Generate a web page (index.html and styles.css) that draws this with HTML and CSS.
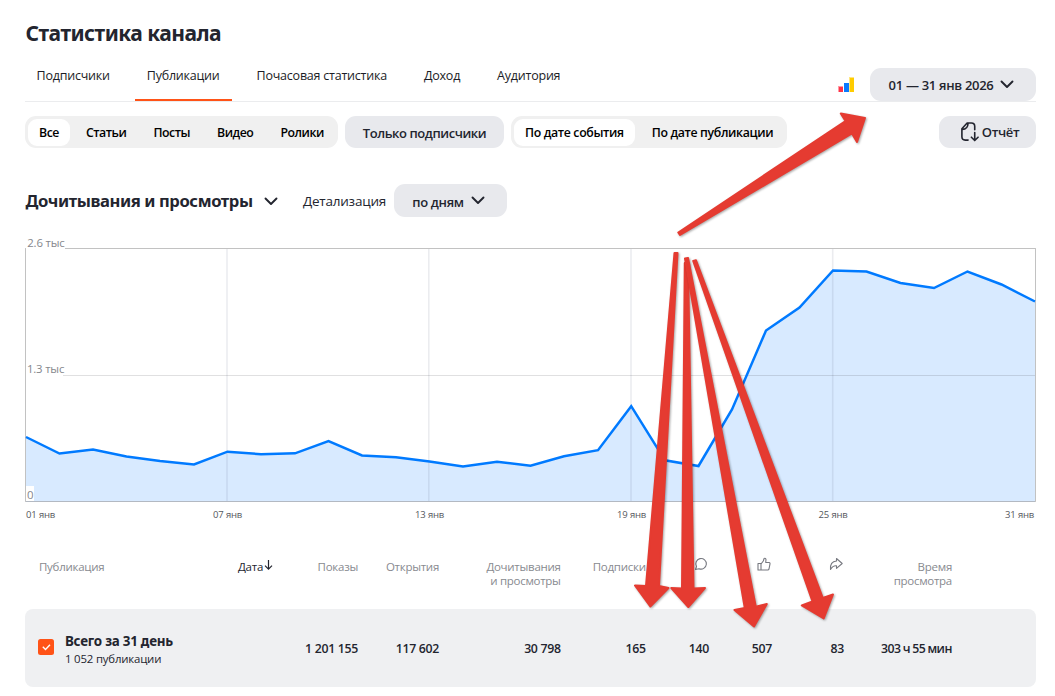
FILE: index.html
```
<!DOCTYPE html>
<html lang="ru">
<head>
<meta charset="utf-8">
<title>Статистика канала</title>
<link rel="stylesheet" href="styles.css">
</head>
<body>
<main class="page">
  <h1 class="title">Статистика канала</h1>
  <header class="header">
    <nav class="tabs">
      <a class="tab">Подписчики</a>
      <a class="tab tab-active">Публикации</a>
      <a class="tab">Почасовая статистика</a>
      <a class="tab">Доход</a>
      <a class="tab">Аудитория</a>
    </nav>
    <svg class="metrica" viewBox="0 0 16 16"><path fill="#ff9aa5" d="M0 9h5v6H0z"/><path fill="#ff3347" d="M1 10h4v5H1z"/><path fill="#0a7aff" d="M6 6h5v9H6z"/><path fill="#ffe680" d="M11 0h5v15h-5z"/><path fill="#fc0" d="M12 1h4v14h-4z"/></svg>
    <button class="button period">01 — 31 янв 2026<svg class="chevron" viewBox="0 0 14 9"><path d="M1.5 1.5 7 7l5.500-5.500"/></svg></button>
  </header>

  <section class="filters">
    <div class="group types">
      <span class="segment selected">Все</span><span class="segment">Статьи</span><span class="segment">Посты</span><span class="segment">Видео</span><span class="segment">Ролики</span>
    </div>
    <button class="button subscribers">Только подписчики</button>
    <div class="group dates">
      <span class="segment selected">По дате события</span><span class="segment">По дате публикации</span>
    </div>
    <button class="button report"><svg class="report-icon" viewBox="0 0 20 22"><path d="M8.500 19.500H5.500Q2 19.500 2 16V7.500L7.500 1.500H12Q15.500 1.500 15.500 5V8.500M2.500 8.200Q8.200 8.200 8.500 1.800M15.500 11.500V19.500M12 16.500l3.500 3.500 3.500-3.500"/></svg>Отчёт</button>
  </section>

  <section class="chart-head">
    <h2 class="metric">Дочитывания и просмотры</h2>
    <svg class="chevron metric-chevron" viewBox="0 0 14 9"><path d="M1.500 1.500 7 7l5.500-5.500"/></svg>
    <span class="detail">Детализация</span>
    <button class="button by-day">по дням<svg class="chevron" viewBox="0 0 14 9"><path d="M1.500 1.500 7 7l5.500-5.500"/></svg></button>
  </section>

  <svg class="chart" viewBox="25 234 1011 292">
    <path class="area" d="M26 501.500V437L59.500 453.500 93 449.500 126.500 456.500 160 461 194 464.500 227.500 451.700 261 454.200 295 453.300 328.500 441 362 455.500 396 457.300 429.500 461.500 463 466.500 497 461.700 530.500 465.700 564 456.200 598 450.200 631.200 406.200 665 460.300 698.500 466 732 409.500 766 330.500 799.500 307.500 833 270.500 866.500 271.500 900.500 283 934 288 967.500 271.500 1001.500 284.500 1035 301.500V501.500z"/>
    <path class="grid-v" d="M227 249V501M428.800 249V501M631 249V501M832.700 249V501"/>
    <path class="grid-h" d="M26 375.500H1035"/>
    <path class="frame" d="M25.500 501.500V248.500H1035.500V501.500z"/>
    <polyline class="line" points="26,437 59.500,453.500 93,449.500 126.500,456.500 160,461 194,464.500 227.500,451.700 261,454.200 295,453.300 328.500,441 362,455.500 396,457.300 429.500,461.500 463,466.500 497,461.700 530.500,465.700 564,456.200 598,450.200 631.200,406.200 665,460.300 698.500,466 732,409.500 766,330.500 799.500,307.500 833,270.500 866.500,271.500 900.500,283 934,288 967.500,271.500 1001.500,284.500 1035,301.500"/>
    <path class="label-bg" d="M26 236h39v13H26zM26 363h37v13H26zM26 486h8v15H26z"/>
    <g class="y-labels"><text x="27.300" y="247">2.6 тыс</text><text x="27" y="373">1.3 тыс</text><text x="27" y="498.500">0</text></g>
    <g class="x-labels"><text x="26" y="518">01 янв</text><text x="213" y="518">07 янв</text><text x="415" y="518">13 янв</text><text x="617" y="518">19 янв</text><text x="818.500" y="518">25 янв</text><text x="1005" y="518">31 янв</text></g>
  </svg>

  <section class="row head">
    <div class="first">Публикация</div>
    <div class="sorted">Дата<svg class="sort" viewBox="0 0 9 12"><path d="M4.500 1v9M1 6.700l3.500 3.500L8 6.700"/></svg></div>
    <div>Показы</div>
    <div>Открытия</div>
    <div>Дочитывания<br>и просмотры</div>
    <div>Подписки</div>
    <div><svg class="icon" viewBox="0 0 14 14"><path d="M2.500 9.500A5.300 5.300 0 1 1 5 11.700L1.500 12.500z"/></svg></div>
    <div><svg class="icon" viewBox="0 0 14 14"><path d="M1 6.500h3V13H1zM4 7l2.300-3 .8-2.500Q8.700.8 9 2.500L8.700 5.500h3.500q1 .2.800 1.300L12 12q-.3 1-1.300 1H4"/></svg></div>
    <div><svg class="icon share" viewBox="0 0 14 14"><path d="M7.500 4V1.500L13.200 6.500 7.500 11.300V8.800Q4 8.300 1.500 12.500 .8 4.500 7.500 4z"/></svg></div>
    <div>Время<br>просмотра</div>
  </section>
  <section class="row total">
    <div class="first summary">
      <svg class="check" viewBox="0 0 16 16"><rect width="16" height="16" rx="2.500"/><path d="m4.800 7.800 2.700 2.600 4.500-4.600"/></svg>
      <div><div class="total-title">Всего за 31 день</div><div class="total-count">1 052 публикации</div></div>
    </div>
    <div></div>
    <div>1 201 155</div>
    <div>117 602</div>
    <div>30 798</div>
    <div>165</div>
    <div>140</div>
    <div>507</div>
    <div>83</div>
    <div class="time">303 ч 55 мин</div>
  </section>
</main>

<svg class="arrows" viewBox="0 0 1055 696">
  <path d="M678.300 232.500 845.500 121 840.800 113.500 865 118 857 142 852 133.500 680 235Z"/>
  <path d="M674.500 253 677.500 253 659 586 668.500 588 650.300 606.500 635 585.500 646 586Z"/>
  <path d="M684.800 263 688 263 693.500 588.500 705 588 688.300 607 671.300 588 682 588.500Z"/>
  <path d="M685 258.500 688 258 755.800 606.700 766.800 604 754 626.500 734.500 610 744.800 608Z"/>
  <path d="M693.200 261 696 260.300 822.800 598 833 594.500 823.700 618.500 801.800 605.500 812.500 601.500Z"/>
</svg>
</body>
</html>
```
FILE: styles.css
```
* { box-sizing: border-box; }
body { margin: 0; background: #fff; color: #23252f; font-family: "Open Sans", "Noto Sans", sans-serif; }
.page { width: 1055px; height: 696px; padding: 20px 19px 0 25px; }
.title { margin: 0; height: 27px; padding-left: .5px; font: 700 21px/27px "Noto Sans", sans-serif; letter-spacing: -.52px; white-space: nowrap; }

.header { display: flex; height: 55px; border-bottom: 1px solid #ebecee; align-items: flex-end; }
.tabs { display: flex; gap: 13px; height: 54px; margin-left: -.4px; }
.tab { height: 54px; padding: 19px 12px 0; font-size: 12.5px; font-weight: 500; line-height: 20px; letter-spacing: -.225px; color: #1b1d26; white-space: nowrap; }
.tab-active { border-bottom: 2px solid #ff5317; }
.metrica { width: 16px; height: 16px; margin: 0 16px 8px auto; }

.button { display: flex; align-items: center; justify-content: center; border: 0; padding: 0; border-radius: 11px; background: #e8e9ed; color: #23252f; font: 600 13px/20px "Open Sans", sans-serif; letter-spacing: -.35px; white-space: nowrap; }
.chevron { width: 14px; height: 9px; fill: none; stroke: #23252f; stroke-width: 1.9; stroke-linecap: round; stroke-linejoin: round; }
.button .chevron { margin-left: 7px; }
.period { width: 166px; height: 33px; padding-right: 3px; letter-spacing: -.3px; }

.filters { display: flex; gap: 7px; margin-top: 14px; height: 32px; }
.group { display: flex; gap: 3px; height: 32px; padding: 3px 0 2px 3px; border-radius: 11px; background: #f0f0f0; color: #000; font-size: 12.3px; font-weight: 600; line-height: 27px; letter-spacing: -.33px; }
.segment { padding: 0 11px; height: 27px; border-radius: 9px; white-space: nowrap; }
.selected { background: #fff; }
.types { width: 313px; gap: 5px; letter-spacing: -.46px; }
.dates { width: 276px; gap: 6px; letter-spacing: -.34px; }
.subscribers { width: 159px; padding-top: 1px; letter-spacing: -.43px; }
.report { width: 97px; margin-left: auto; padding-left: 4px; gap: 3px; }
.report-icon { width: 19px; height: 22px; fill: none; stroke: #23252f; stroke-width: 1.7; stroke-linecap: round; stroke-linejoin: round; }

.chart-head { display: flex; align-items: center; height: 33px; margin-top: 36px; }
.metric { margin: 0; width: 227px; padding-left: .5px; font: 700 16.6px/24px "Noto Sans", sans-serif; letter-spacing: -.4px; white-space: nowrap; }
.metric-chevron { margin: 2px 0 0 12px; }
.detail { margin-left: 25px; width: 91px; padding-top: 1px; font-size: 13.5px; letter-spacing: -.23px; }
.by-day { width: 113px; height: 33px; padding: 2px 4px 0 0; }
.by-day .chevron { margin-top: -3px; }

.chart { display: block; width: 1011px; height: 292px; margin-top: 17px; }
.area { fill: #d8eaff; }
.grid-v { stroke: rgba(60, 70, 100, .1); stroke-width: 1.6; }
.grid-h { stroke: rgba(60, 60, 70, .16); }
.frame { fill: none; stroke: rgba(0, 0, 0, .24); }
.line { fill: none; stroke: #007aff; stroke-width: 2.5; }
.label-bg { fill: #fff; }
.y-labels { fill: #85878d; font-size: 11.4px; letter-spacing: -.2px; }
.x-labels { fill: #55575d; font-size: 9.5px; letter-spacing: -.15px; }

.row { display: grid; grid-template-columns: 200px 47px 86px 81px 121.7px 85px 63.3px 63px 72px 108px; text-align: right; }
.head { height: 83px; padding-top: 34px; color: #888a8f; font-size: 11.5px; line-height: 14px; letter-spacing: -.27px; }
.first { text-align: left; padding-left: 14px; }
.sorted { display: flex; justify-content: flex-end; color: #23252f; font-weight: 500; white-space: nowrap; }
.sort { width: 9px; height: 12px; margin: -1px -1px 0 1px; fill: none; stroke: #23252f; stroke-width: 1.2; }
.icon { width: 14px; height: 14px; margin: -3px .5px 0 0; fill: none; stroke: #777980; stroke-width: 1.1; stroke-linejoin: round; }
.total { height: 78px; align-items: center; background: #eff0f2; border-radius: 8px; font-size: 12.3px; font-weight: 650; line-height: 17px; letter-spacing: -.3px; white-space: nowrap; }
.summary { display: flex; align-items: center; gap: 11px; padding: 2px 0 0 13px; }
.check { width: 16px; height: 16px; margin-top: -5px; }
.check rect { fill: #ff5317; }
.check path { fill: none; stroke: #fff; stroke-width: 1.4; }
.total-title { font: 700 13.4px/18px "Noto Sans", sans-serif; letter-spacing: -.24px; }
.total-count { font-size: 11.4px; font-weight: 400; letter-spacing: -.18px; }
.time { letter-spacing: -.47px; word-spacing: -.6px; }

/* Annotation arrows lie above the whole page. */
.arrows { position: absolute; inset: 0; width: 1055px; height: 696px; pointer-events: none; }
.arrows path { fill: #e53b31; stroke: #e53b31; stroke-width: 2; stroke-linejoin: round; filter: drop-shadow(1px 1px 1px rgba(0, 0, 0, .35)); }
```
